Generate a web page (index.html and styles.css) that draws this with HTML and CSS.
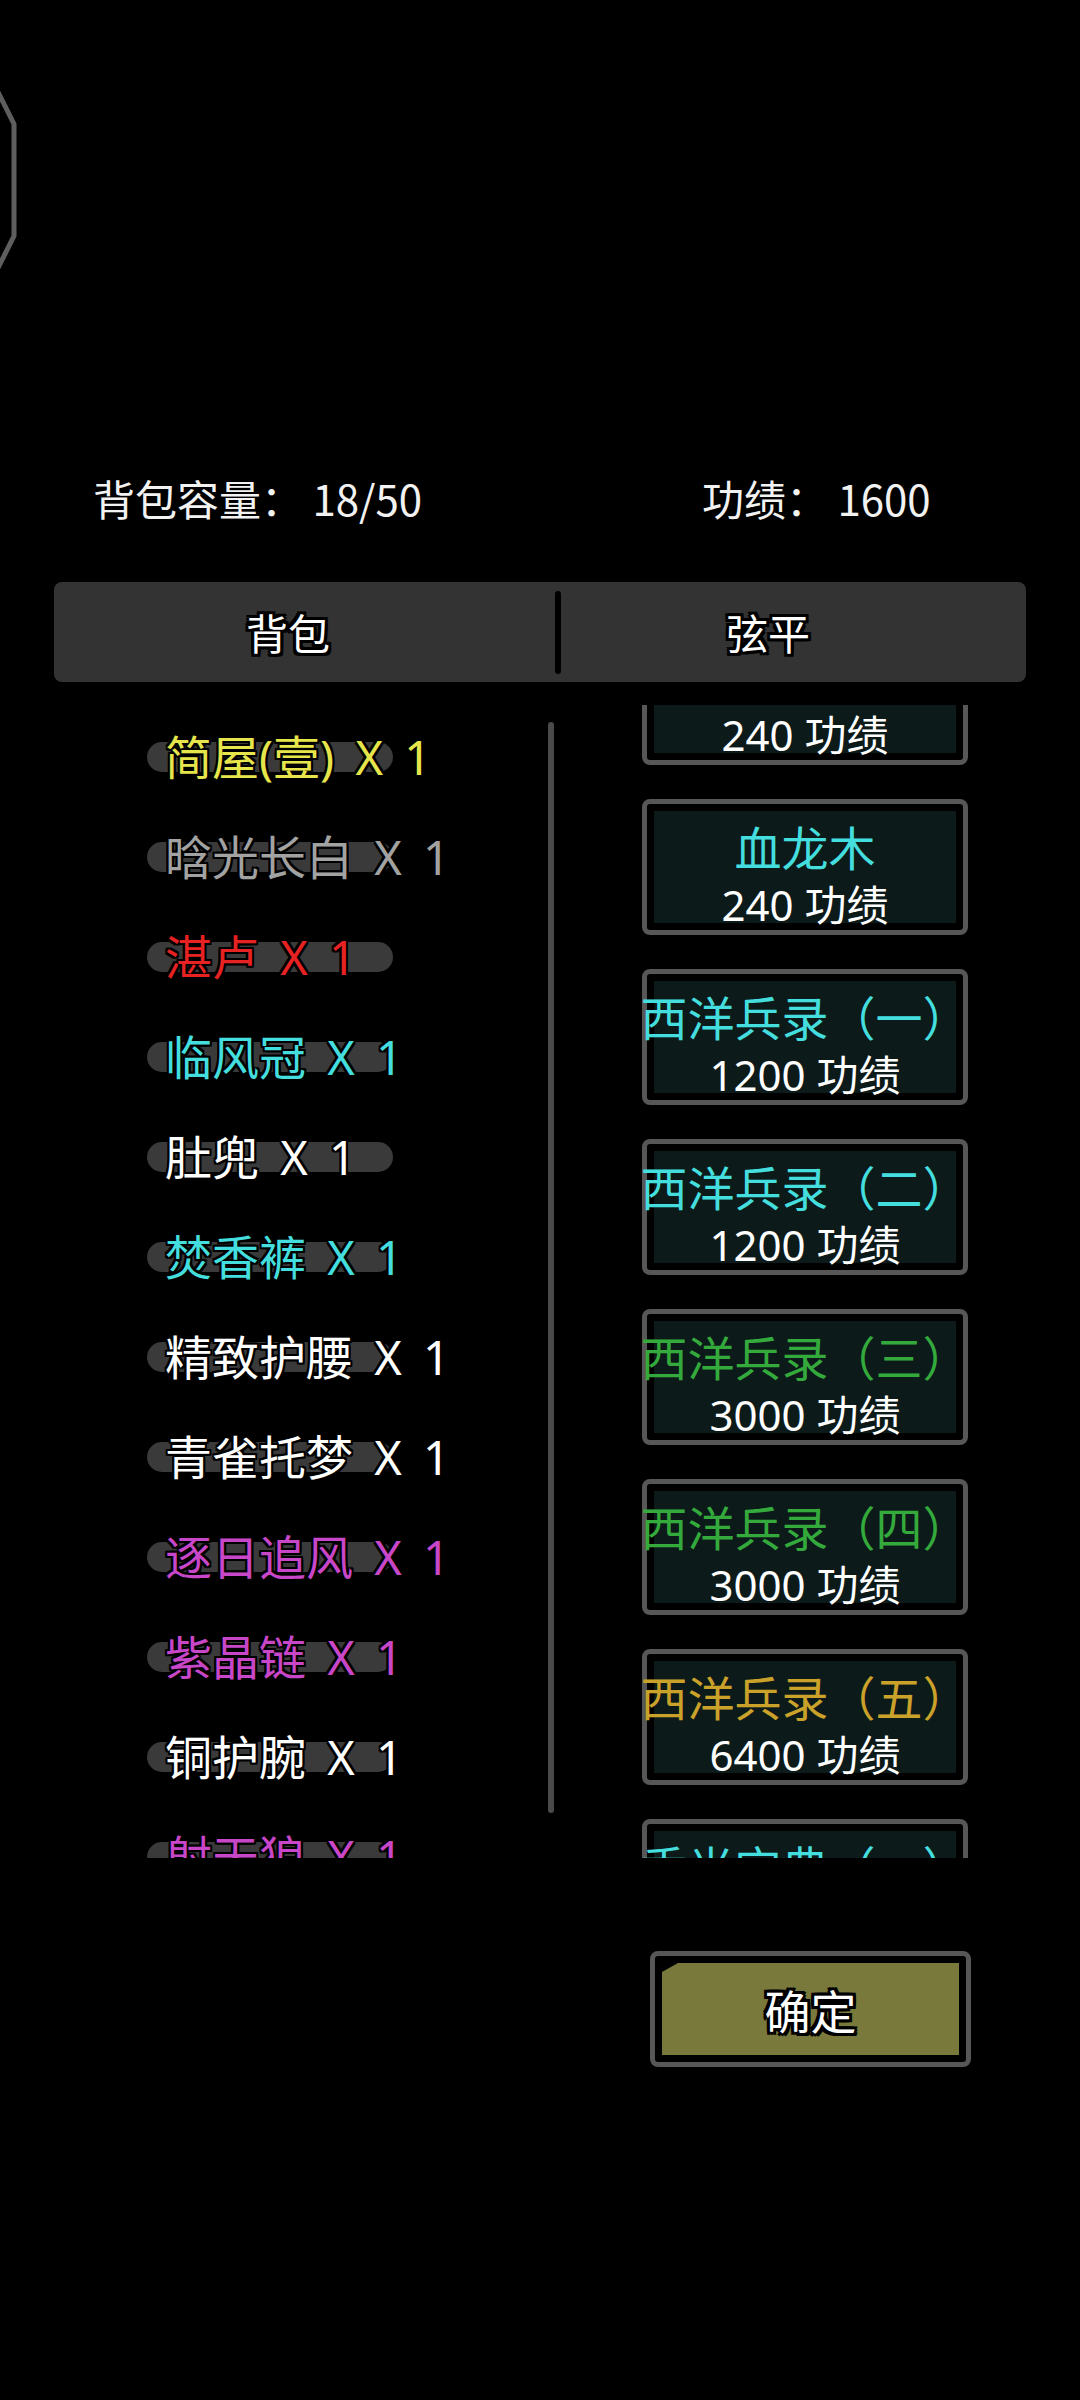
FILE: index.html
```html
<!DOCTYPE html>
<html lang="zh-CN">
<head>
    <meta charset="UTF-8">
    <meta name="viewport" content="width=device-width, initial-scale=1.0">
    <title>背包 - 弦平</title>
    <link rel="stylesheet" href="styles.css">
</head>
<body>
    <div class="top">
        <svg class="frame-edge" width="24" height="280" viewBox="0 0 24 280">
            <path d="M-2 92 L14 124 L14 236 L-2 268" fill="none" stroke="#5e5e5e" stroke-width="5" stroke-linejoin="round"/>
        </svg>
    </div>

    <div class="stats">
        <span class="stat-bag">背包容量： 18/50</span>
        <span class="stat-merit">功绩： 1600</span>
    </div>

    <div class="tabs">
        <div class="tab tab-left">背包</div>
        <div class="tab-divider"></div>
        <div class="tab tab-right">弦平</div>
    </div>

    <div class="content">
        <div class="bag-col">
            <div class="bag-list">
                <div class="bag-item"><div class="slot q-yellow">简屋(壹) X 1</div></div>
                <div class="bag-item"><div class="slot q-gray">晗光长白 X 1</div></div>
                <div class="bag-item"><div class="slot q-red">湛卢 X 1</div></div>
                <div class="bag-item"><div class="slot q-cyan">临风冠 X 1</div></div>
                <div class="bag-item"><div class="slot q-white">肚兜 X 1</div></div>
                <div class="bag-item"><div class="slot q-cyan">焚香裤 X 1</div></div>
                <div class="bag-item"><div class="slot q-white">精致护腰 X 1</div></div>
                <div class="bag-item"><div class="slot q-white">青雀托梦 X 1</div></div>
                <div class="bag-item"><div class="slot q-purple">逐日追风 X 1</div></div>
                <div class="bag-item"><div class="slot q-purple">紫晶链 X 1</div></div>
                <div class="bag-item"><div class="slot q-white">铜护腕 X 1</div></div>
                <div class="bag-item"><div class="slot q-purple">射天狼 X 1</div></div>
            </div>
            <div class="scrollbar"></div>
        </div>

        <div class="shop-col">
            <div class="shop-list">
                <div class="card"><div class="card-fill">
                    <div class="card-title q-cyan">乌金木</div>
                    <div class="card-price">240 功绩</div>
                </div></div>
                <div class="card"><div class="card-fill">
                    <div class="card-title q-cyan">血龙木</div>
                    <div class="card-price">240 功绩</div>
                </div></div>
                <div class="card"><div class="card-fill">
                    <div class="card-title q-cyan">西洋兵录（一）</div>
                    <div class="card-price">1200 功绩</div>
                </div></div>
                <div class="card"><div class="card-fill">
                    <div class="card-title q-cyan">西洋兵录（二）</div>
                    <div class="card-price">1200 功绩</div>
                </div></div>
                <div class="card"><div class="card-fill">
                    <div class="card-title q-green">西洋兵录（三）</div>
                    <div class="card-price">3000 功绩</div>
                </div></div>
                <div class="card"><div class="card-fill">
                    <div class="card-title q-green">西洋兵录（四）</div>
                    <div class="card-price">3000 功绩</div>
                </div></div>
                <div class="card"><div class="card-fill">
                    <div class="card-title q-gold">西洋兵录（五）</div>
                    <div class="card-price">6400 功绩</div>
                </div></div>
                <div class="card"><div class="card-fill">
                    <div class="card-title q-cyan">香光宝典（一）</div>
                    <div class="card-price">9000 功绩</div>
                </div></div>
            </div>
        </div>
    </div>

    <div class="actions">
        <div class="confirm"><div class="confirm-fill">确定</div></div>
    </div>
</body>
</html>
```

FILE: styles.css
```css
body {
    margin: 0;
    width: 1080px;
    height: 2400px;
    background-color: #000;
    color: #fff;
    font-family: "Noto Sans CJK SC", "Noto Sans", sans-serif;
    overflow: hidden;
}

.top {
    height: 474px;
}

.frame-edge {
    display: block;
}

.stats {
    display: flex;
    padding-left: 93px;
    height: 48px;
    font-size: 42px;
    line-height: 48px;
    color: #f2f2f2;
}

.stat-bag {
    width: 609px;
}

.tabs {
    display: grid;
    grid-template-columns: 501px 6px 1fr;
    align-items: center;
    margin: 60px 54px 0;
    height: 100px;
    background-color: #333;
    border-radius: 8px;
}

.tab {
    text-align: center;
    font-size: 42px;
    line-height: 100px;
    text-shadow: -3px -3px 0 #000, 3px -3px 0 #000, -3px 3px 0 #000, 3px 3px 0 #000,
                 0 3px 0 #000, 0 -3px 0 #000, 3px 0 0 #000, -3px 0 0 #000;
}

.tab-left {
    padding-right: 33px;
}

.tab-right {
    padding-right: 51px;
}

.tab-divider {
    height: 83px;
    background-color: #000;
    border-radius: 3px;
}

.content {
    display: grid;
    grid-template-columns: 560px 1fr;
    margin-top: 23px;
    height: 1153px;
    overflow: hidden;
}

.bag-col {
    display: grid;
    grid-template-columns: 548px 6px;
    height: 1153px;
    overflow: hidden;
}

.bag-list {
    padding-top: 2px;
}

.bag-item {
    display: flex;
    align-items: center;
    height: 100px;
    padding-left: 147px;
}

.slot {
    width: 246px;
    height: 30px;
    box-sizing: border-box;
    padding-left: 18px;
    border-radius: 15px;
    background-color: #3a3a3a;
    font-family: "Noto Sans", "Noto Sans CJK SC", sans-serif;
    font-size: 47px;
    line-height: 30px;
    word-spacing: 9px;
    white-space: nowrap;
    text-shadow: -2px -2px 0 #000, 2px -2px 0 #000, -2px 2px 0 #000, 2px 2px 0 #000,
                 0 2px 0 #000, 0 -2px 0 #000, 2px 0 0 #000, -2px 0 0 #000;
}

.scrollbar {
    margin-top: 17px;
    height: 1091px;
    background-color: #4a4a4a;
    border-radius: 3px;
}

.shop-col {
    padding-left: 82px;
    height: 1153px;
    overflow: hidden;
}

.shop-list {
    display: flex;
    flex-direction: column;
    gap: 34px;
    margin-top: -76px;
    width: 326px;
}

.card {
    height: 136px;
    box-sizing: border-box;
    padding: 7px;
    border: 5px solid #575757;
    border-radius: 8px;
}

.card-fill {
    height: 100%;
    background-color: #0d1a1a;
    text-align: center;
}

.card-title {
    padding-top: 10px;
    margin: 0 -40px;
    font-size: 47px;
    line-height: 50px;
    white-space: nowrap;
}

.card-price {
    margin-top: 14px;
    font-family: "Noto Sans", "Noto Sans CJK SC", sans-serif;
    font-size: 42px;
    line-height: 40px;
    color: #fff;
    white-space: nowrap;
}

.actions {
    padding-left: 650px;
    margin-top: 93px;
}

.confirm {
    width: 321px;
    height: 116px;
    box-sizing: border-box;
    padding: 7px;
    border: 5px solid #575757;
    border-radius: 8px;
}

.confirm-fill {
    height: 100%;
    background-color: #79793b;
    clip-path: polygon(16px 0, 100% 0, 100% 100%, 0 100%, 0 9px);
    text-align: center;
    font-size: 46px;
    line-height: 92px;
    text-shadow: -3px -3px 0 #000, 3px -3px 0 #000, -3px 3px 0 #000, 3px 3px 0 #000,
                 0 3px 0 #000, 0 -3px 0 #000, 3px 0 0 #000, -3px 0 0 #000;
}

.q-yellow { color: #e6e64c; }
.q-gray { color: #a2a2a2; }
.q-red { color: #e62222; }
.q-cyan { color: #44dede; }
.q-white { color: #ffffff; }
.q-purple { color: #c846c8; }
.q-green { color: #34aa3c; }
.q-gold { color: #caa22a; }
```
